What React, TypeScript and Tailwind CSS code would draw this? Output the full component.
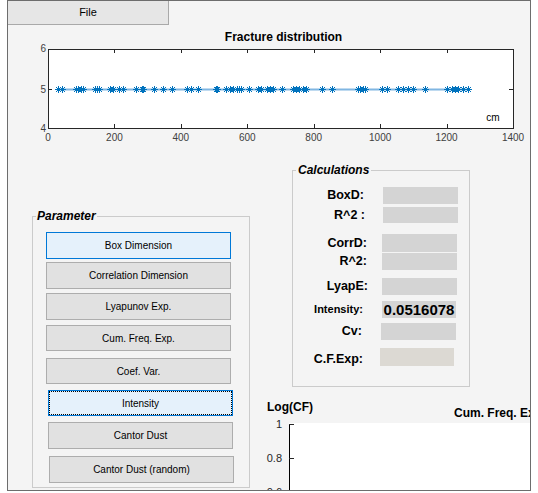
import React from 'react'

// x positions (page px) of the fracture markers, shifted into the svg below
const marks = [
  58, 62, 76, 78, 81, 83, 95, 97, 99, 110, 113, 119, 123, 136, 142, 143, 154, 163, 172, 187, 191, 198,
  216, 217, 226, 230, 233, 237, 239, 241, 249, 258, 261, 267, 270, 273, 282, 293, 296, 299, 303, 306,
  322, 332, 358, 360, 363, 365, 382, 387, 398, 403, 408, 413, 425, 447, 452, 455, 458, 463, 468,
]

const xTicks = [0, 200, 400, 600, 800, 1000, 1200, 1400]

const buttons = [
  { label: 'Box Dimension', cls: 'mt-[15px] ml-[13px] h-[27px] border-[#0078d7] bg-[#e5f1fb]' },
  { label: 'Correlation Dimension', cls: 'mt-[3px] ml-[13px] h-[27px] border-[#adadad] bg-[#e1e1e1]' },
  { label: 'Lyapunov Exp.', cls: 'mt-[4px] ml-[13px] h-[27px] border-[#adadad] bg-[#e1e1e1]' },
  { label: 'Cum. Freq. Exp.', cls: 'mt-[5px] ml-[13px] h-[26px] border-[#adadad] bg-[#e1e1e1]' },
  { label: 'Coef. Var.', cls: 'mt-[7px] ml-[13px] h-[26px] border-[#adadad] bg-[#e1e1e1]' },
  {
    label: 'Intensity',
    cls: 'mt-[6px] ml-[15px] h-[26px] border-[#0078d7] bg-[#e5f1fb] outline-1 outline-dotted outline-black outline-offset-[-2px]',
  },
  { label: 'Cantor Dust', cls: 'mt-[6px] ml-[15px] h-[27px] border-[#adadad] bg-[#e1e1e1]' },
  { label: 'Cantor Dust (random)', cls: 'mt-[7px] ml-[16px] h-[27px] border-[#adadad] bg-[#e1e1e1]' },
]

const Star = ({ x, y }: { x: number; y: number }) => (
  <g stroke="#0072bd" strokeWidth={1}>
    <line x1={x - 3.5} y1={y} x2={x + 3.5} y2={y} />
    <line x1={x} y1={y - 3.5} x2={x} y2={y + 3.5} />
    <line x1={x - 2.5} y1={y - 2.5} x2={x + 2.5} y2={y + 2.5} />
    <line x1={x - 2.5} y1={y + 2.5} x2={x + 2.5} y2={y - 2.5} />
  </g>
)

const FractureAxes = () => {
  const px = (v: number) => 40 + (v / 1400) * 465
  return (
    <svg width={522} height={124} className="block">
      <text x={275.5} y={16} textAnchor="middle" fontSize={12} fontWeight={700} fill="#000">
        Fracture distribution
      </text>
      <rect x={40.5} y={24.5} width={465} height={79} fill="#fff" stroke="#262626" />
      {xTicks.map((t) => (
        <g key={t}>
          <line x1={Math.round(px(t)) + 0.5} y1={24} x2={Math.round(px(t)) + 0.5} y2={28} stroke="#262626" />
          <line x1={Math.round(px(t)) + 0.5} y1={99} x2={Math.round(px(t)) + 0.5} y2={103} stroke="#262626" />
          <text x={px(t)} y={115.5} textAnchor="middle" fontSize={10} fill="#404040">
            {t}
          </text>
        </g>
      ))}
      <line x1={40} y1={64.5} x2={44} y2={64.5} stroke="#262626" />
      <line x1={501} y1={64.5} x2={505} y2={64.5} stroke="#262626" />
      <text x={38} y={27} textAnchor="end" fontSize={10} fill="#404040">6</text>
      <text x={38} y={68} textAnchor="end" fontSize={10} fill="#404040">5</text>
      <text x={38} y={107} textAnchor="end" fontSize={10} fill="#404040">4</text>
      <text x={485} y={95.5} textAnchor="middle" fontSize={10} fill="#000">cm</text>
      <line x1={marks[0] - 8} y1={64.5} x2={marks[marks.length - 1] - 8} y2={64.5} stroke="#80b6e2" strokeWidth={2} />
      {marks.map((m, i) => (
        <Star key={i} x={m - 8 + 0.5} y={64.5} />
      ))}
    </svg>
  )
}

const CumFreqAxes = () => (
  <svg width={280} height={103} className="block overflow-hidden">
    <text x={17} y={23.5} fontSize={12} fontWeight={700} fill="#000">Log(CF)</text>
    <text x={204} y={30} fontSize={12} fontWeight={700} fill="#000">Cum. Freq. Exp.</text>
    <rect x={39} y={36} width={241} height={67} fill="#fff" />
    <line x1={39.5} y1={37} x2={39.5} y2={103} stroke="#000" />
    <line x1={39} y1={37.5} x2={44} y2={37.5} stroke="#262626" />
    <line x1={39} y1={71.5} x2={44} y2={71.5} stroke="#262626" />
    <text x={32} y={41} textAnchor="end" fontSize={11} fill="#262626">1</text>
    <text x={32} y={75} textAnchor="end" fontSize={11} fill="#262626">0.8</text>
    <text x={32} y={109} textAnchor="end" fontSize={11} fill="#262626">0.6</text>
  </svg>
)

const Row = ({
  label,
  rowCls,
  labelCls,
  fieldCls,
  value,
}: {
  label: string
  rowCls: string
  labelCls: string
  fieldCls: string
  value?: string
}) => (
  <div className={`flex items-center ${rowCls}`}>
    <span className={`text-right font-bold text-black leading-none ${labelCls}`}>{label}</span>
    <div className={`flex h-full items-center justify-center ${fieldCls}`}>
      {value && <span className="text-[15px] font-bold leading-none text-black">{value}</span>}
    </div>
  </div>
)

export default function App() {
  return (
    <div className="h-[493px] w-[538px] bg-white font-['Liberation_Sans',Arial,sans-serif]">
      <div className="ml-[7px] flex h-[491px] w-[524px] flex-col border border-[#6d6d6d] bg-[#f4f4f4]">
        <div className="flex h-[24px] w-[161px] items-center justify-center border-b border-r border-[#a9a9a9] bg-[#e6e6e6] text-[11px] text-black">
          File
        </div>
        <FractureAxes />

        <div className="flex flex-1">
          {/* Parameter group */}
          <div className="relative ml-[24px] mt-[67px] flex h-[272px] w-[218px] flex-col border border-[#cbcbcb]">
            <span className="absolute left-[3px] top-[-8px] bg-[#f4f4f4] px-[1px] text-[12px] font-bold italic leading-[14px] text-black">
              Parameter
            </span>
            {buttons.map((b) => (
              <button
                key={b.label}
                className={`flex w-[185px] items-center justify-center border text-[10px] text-black ${b.cls}`}
              >
                {b.label}
              </button>
            ))}
          </div>

          <div className="flex w-[280px] flex-col">
            {/* Calculations group */}
            <div className="relative ml-[42px] mt-[21px] flex h-[217px] w-[178px] flex-col border border-[#cbcbcb]">
              <span className="absolute left-[3px] top-[-8px] bg-[#f4f4f4] px-[2px] text-[12px] font-bold italic leading-[14px] text-black">
                Calculations
              </span>
              <Row label="BoxD:" rowCls="mt-[16px] h-[17px]" labelCls="w-[71px] text-[12.5px]" fieldCls="ml-[19px] w-[75px] bg-[#d4d4d4]" />
              <Row label="R^2 :" rowCls="mt-[3px] h-[16px]" labelCls="w-[72px] text-[12.5px]" fieldCls="ml-[18px] w-[75px] bg-[#d4d4d4]" />
              <Row label="CorrD:" rowCls="mt-[11px] h-[18px]" labelCls="w-[74px] text-[12.5px]" fieldCls="ml-[15px] w-[75px] bg-[#d4d4d4]" />
              <Row label="R^2:" rowCls="mt-[1px] h-[17px]" labelCls="w-[74px] text-[12.5px]" fieldCls="ml-[15px] w-[75px] bg-[#d4d4d4]" />
              <Row label="LyapE:" rowCls="mt-[8px] h-[17px]" labelCls="w-[75px] text-[12.5px]" fieldCls="ml-[14px] w-[75px] bg-[#d4d4d4]" />
              <Row
                label="Intensity:"
                rowCls="mt-[6px] h-[17px]"
                labelCls="w-[70px] text-[11px]"
                fieldCls="ml-[19px] w-[74px] bg-[#d4d4d4]"
                value="0.0516078"
              />
              <Row label="Cv:" rowCls="mt-[5px] h-[17px]" labelCls="w-[69px] text-[12.5px]" fieldCls="ml-[19px] w-[75px] bg-[#d4d4d4]" />
              <Row label="C.F.Exp:" rowCls="mt-[8px] h-[18px]" labelCls="w-[70px] pt-[4px] text-[12.5px]" fieldCls="ml-[17px] w-[74px] bg-[#dcd9d3]" />
            </div>
            <CumFreqAxes />
          </div>
        </div>
      </div>
    </div>
  )
}
